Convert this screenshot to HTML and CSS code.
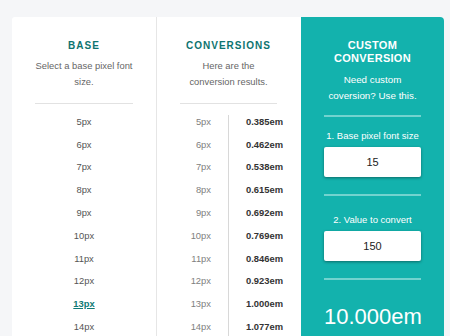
FILE: index.html
```html
<!DOCTYPE html>
<html>
<head>
<meta charset="utf-8">
<link rel="stylesheet" href="styles.css">
</head>
<body>
<div class="card">
  <section class="col base">
    <h2 class="heading">BASE</h2>
    <p class="desc">Select a base pixel font size.</p>
    <hr class="rule">
    <ul class="list">
      <li class="item">5px</li>
      <li class="item">6px</li>
      <li class="item">7px</li>
      <li class="item">8px</li>
      <li class="item">9px</li>
      <li class="item">10px</li>
      <li class="item">11px</li>
      <li class="item">12px</li>
      <li class="item"><a class="active">13px</a></li>
      <li class="item">14px</li>
    </ul>
  </section>
  <section class="col conv">
    <h2 class="heading">CONVERSIONS</h2>
    <p class="desc">Here are the conversion results.</p>
    <hr class="rule">
    <div class="table">
      <div class="labels">
        <div class="row">5px</div>
        <div class="row">6px</div>
        <div class="row">7px</div>
        <div class="row">8px</div>
        <div class="row">9px</div>
        <div class="row">10px</div>
        <div class="row">11px</div>
        <div class="row">12px</div>
        <div class="row">13px</div>
        <div class="row">14px</div>
      </div>
      <div class="values">
        <div class="row">0.385em</div>
        <div class="row">0.462em</div>
        <div class="row">0.538em</div>
        <div class="row">0.615em</div>
        <div class="row">0.692em</div>
        <div class="row">0.769em</div>
        <div class="row">0.846em</div>
        <div class="row">0.923em</div>
        <div class="row">1.000em</div>
        <div class="row">1.077em</div>
      </div>
    </div>
  </section>
  <section class="col custom">
    <h2 class="heading custom-heading">CUSTOM CONVERSION</h2>
    <p class="desc custom-desc">Need custom coversion? Use this.</p>
    <hr class="rule light">
    <label class="label">1. Base pixel font size</label>
    <div class="input">15</div>
    <hr class="rule light gap">
    <label class="label second">2. Value to convert</label>
    <div class="input">150</div>
    <hr class="rule light gap">
    <div class="result">10.000em</div>
  </section>
</div>
</body>
</html>
```

FILE: styles.css
```css
html, body {
  margin: 0;
  padding: 0;
  background: #f5f6f8;
  overflow: hidden;
  height: 336px;
}
body {
  padding: 17px 0 0 12px;
  font-family: "Liberation Sans", Arial, sans-serif;
  box-sizing: border-box;
}
.card {
  display: flex;
  width: 432px;
  height: 400px;
  background: #fff;
  border-radius: 3px 4px 0 0;
}
.col {
  box-sizing: border-box;
  padding: 22.3px 23px 0 23px;
  text-align: center;
  flex-shrink: 0;
}
.base {
  width: 145px;
  border-right: 1px solid #e6e6e6;
}
.conv {
  width: 144px;
  padding-right: 24px;
}
.custom {
  width: 143px;
  background: #13b2ad;
  border-top-right-radius: 4px;
  color: #fff;
}
.heading {
  margin: 0;
  font-size: 10px;
  line-height: 13px;
  font-weight: bold;
  letter-spacing: 1px;
  color: #0d7470;
}
.custom-heading {
  font-size: 11px;
  letter-spacing: 0.3px;
  color: #fff;
}
.desc {
  margin: 6px 0 0;
  font-size: 9.4px;
  line-height: 16px;
  color: #666;
}
.custom-desc {
  margin-top: 7px;
  font-size: 9.8px;
  color: #fff;
}
.rule {
  margin: 12.5px 0 0;
  border: 0;
  height: 1px;
  background: #e2e2e2;
}
.rule.light {
  margin-top: 11px;
  height: 2px;
  background: #72d3cf;
}
.rule.gap {
  margin-top: 17px;
}
.list {
  list-style: none;
  margin: 11px 0 0;
  padding: 0;
}
.item, .row {
  height: 22.8px;
  line-height: 14px;
  font-size: 9.4px;
  white-space: nowrap;
}
.item {
  color: #555;
}
.active {
  color: #0f7a75;
  font-weight: bold;
  text-decoration: underline;
}
.table {
  display: flex;
  margin-top: 11px;
}
.labels {
  width: 48px;
  flex-shrink: 0;
  box-sizing: border-box;
  padding-right: 17px;
  text-align: right;
  color: #808080;
}
.values {
  flex: 1;
  min-width: 0;
  border-left: 1px solid #d8d8d8;
  padding-left: 17px;
  text-align: left;
  font-weight: bold;
  color: #333;
}
.label {
  display: block;
  margin-top: 11.5px;
  font-size: 9.5px;
  line-height: 14px;
}
.label.second {
  margin-top: 17px;
}
.input {
  margin-top: 4px;
  height: 30px;
  line-height: 30px;
  background: #fff;
  border-radius: 2px;
  box-shadow: 0 1px 3px rgba(0, 0, 0, 0.4);
  color: #222;
  font-size: 11px;
}
.result {
  margin-top: 24.6px;
  font-size: 22px;
  line-height: 26px;
  color: #fff;
}
```
